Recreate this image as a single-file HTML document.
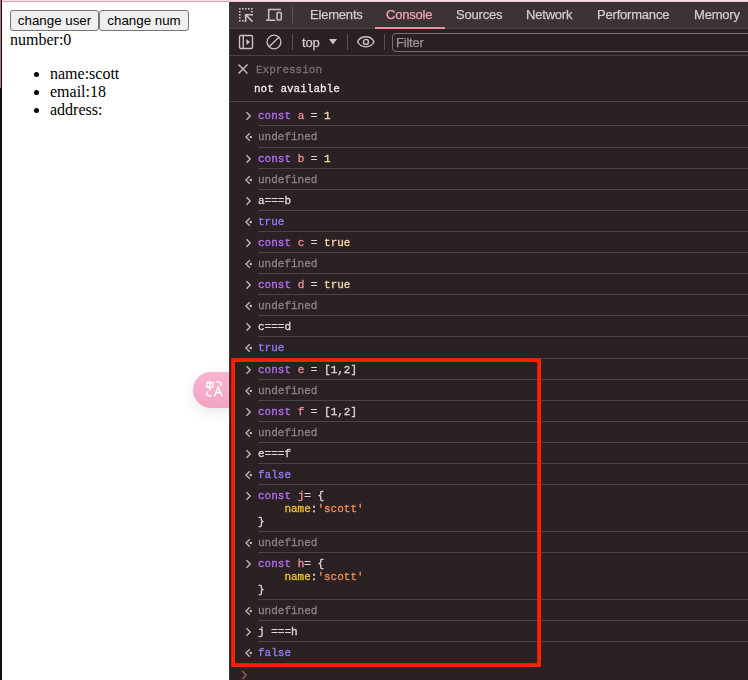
<!DOCTYPE html>
<html><head><meta charset="utf-8">
<style>
*{box-sizing:border-box}
html,body{margin:0;padding:0;width:748px;height:680px;overflow:hidden;background:#fff;position:relative}
.a{position:absolute}
#page{position:absolute;left:0;top:0;width:229px;height:680px;background:#fff;font-family:"Liberation Serif",serif;font-size:16px;color:#000}
.btn{position:absolute;top:10px;height:21px;background:#efefef;border:1px solid #767676;border-radius:3px;font-family:"Liberation Sans",sans-serif;font-size:13.33px;color:#000;line-height:20px;text-align:center;padding:0}
#dt{position:absolute;left:229px;top:0;width:519px;height:680px;background:#292122;overflow:hidden}
.tabbar{position:absolute;left:0;top:2px;width:519px;height:26px;background:#3c3335}
.tb1{position:absolute;left:0;top:28px;width:519px;height:1px;background:#4b4244}
.tab{position:absolute;will-change:transform;-webkit-text-stroke:0.25px currentColor;top:8px;font-family:"Liberation Sans",sans-serif;font-size:13px;letter-spacing:-0.2px;color:#d9c9cb;line-height:14px;white-space:nowrap}
.mono{font-family:"Liberation Mono",monospace}
.ln{position:absolute;will-change:transform;-webkit-text-stroke:0.3px currentColor;left:258px;font-family:"Liberation Mono",monospace;font-size:11px;line-height:13px;color:#e2d5d6;white-space:pre}
.sep{position:absolute;left:258px;width:490px;height:1px;background:#4a4244}
.ic{position:absolute}
.k{color:#b56ef3}
.v{color:#f08e9e}
.n{color:#fadbb0}
.k2{color:#fadbb0}
.u{color:#8c8384}
.b{color:#907ff7}
.p{color:#f0c428}
.s{color:#f28a52}
</style></head><body>
<div id="page">
  <div class="btn" style="left:10px;width:89px">change user</div>
  <div class="btn" style="left:99px;width:90px">change num</div>
  <div class="a" style="left:10px;top:31px;line-height:18px">number:0</div>
  <ul class="a" style="left:10px;top:65px;margin:0;padding:0 0 0 40px;line-height:18px;list-style:disc">
    <li style="margin-left:0">name:scott</li>
    <li>email:18</li>
    <li>address:</li>
  </ul>
  <div class="a" style="left:0;top:0;width:1px;height:88px;background:#b87684"></div>
  <div class="a" style="left:0;top:88px;width:1px;height:592px;background:#111"></div>
  <div class="a" style="left:1px;top:0;width:1px;height:680px;background:#0c0c0c"></div>
  <!-- translate pill -->
  <div class="a" style="left:193px;top:372px;width:60px;height:36px;border-radius:18px;background:linear-gradient(#f9b5d0,#f1a4c3);box-shadow:0 4px 14px rgba(0,0,0,0.09)"></div>
  <svg class="a" style="left:202px;top:376px" width="24" height="24" viewBox="0 0 24 24" fill="none" stroke="#fff" stroke-width="1.45">
    <rect x="4.7" y="6.7" width="6.2" height="4.4"/>
    <path d="M7.8 4.8 V14.5"/>
    <path d="M14 5.8 H17 Q18.9 5.8 18.9 7.7 V9.9"/>
    <path d="M5 15.4 V17.4 Q5 19.8 7.4 19.8 H9.7"/>
    <path d="M12.3 20.5 L16.2 11.4 L20.2 20.5 M13.7 16.7 H18.7"/>
  </svg>
</div>
<div id="dt"></div>
<div class="a" style="left:229px;top:29px;width:1px;height:651px;background:#403638"></div>
<!-- devtools, page coords -->
<div class="a" style="left:229px;top:2px;width:519px;height:26px;background:#3c3335"></div>
<div class="a" style="left:229px;top:28px;width:519px;height:1px;background:#4b4244"></div>
<div class="a" style="left:229px;top:55px;width:519px;height:1px;background:#4b4244"></div>
<div class="a" style="left:229px;top:101px;width:519px;height:1px;background:#4b4244"></div>
<div class="a" style="left:2px;top:0;width:746px;height:1px;background:#fcdce3"></div>
<div class="a" style="left:2px;top:1px;width:227px;height:1px;background:#cba9b1"></div><div class="a" style="left:229px;top:1px;width:519px;height:1px;background:#e8c6cd"></div>

<!-- tab bar -->
<svg class="a" style="left:237px;top:7px" width="18" height="17" viewBox="0 0 18 17">
  <g fill="#cfc0c2">
    <rect x="2" y="1" width="1.6" height="1.6"/><rect x="5" y="1" width="1.6" height="1.6"/><rect x="8" y="1" width="1.6" height="1.6"/><rect x="11" y="1" width="1.6" height="1.6"/><rect x="14" y="1" width="1.6" height="1.6"/>
    <rect x="2" y="4" width="1.6" height="1.6"/><rect x="14" y="4" width="1.6" height="1.6"/>
    <rect x="2" y="7" width="1.6" height="1.6"/><rect x="2" y="10" width="1.6" height="1.6"/><rect x="2" y="13" width="1.6" height="1.6"/><rect x="5" y="13" width="1.6" height="1.6"/>
  </g>
  <path d="M8.6 15 V7.7 H16 M9 8.1 L15.6 14.7" fill="none" stroke="#cfc0c2" stroke-width="1.6"/>
</svg>
<svg class="a" style="left:265px;top:8px" width="18" height="14" viewBox="0 0 18 14">
  <path d="M3.7 12 V1.5 H16 M1 12.2 H10.3" fill="none" stroke="#cfc0c2" stroke-width="1.5"/>
  <rect x="12" y="4.6" width="4.3" height="7.5" rx="1" fill="none" stroke="#cfc0c2" stroke-width="1.5"/>
</svg>
<div class="a" style="left:292px;top:7px;width:1px;height:16px;background:#5c5254"></div>
<div class="tab" style="left:310px">Elements</div>
<div class="tab" style="left:386px;color:#f4a2b2">Console</div>
<div class="a" style="left:375px;top:27px;width:70px;height:2px;background:#f28ca2"></div>
<div class="tab" style="left:456px">Sources</div>
<div class="tab" style="left:526px">Network</div>
<div class="tab" style="left:597px">Performance</div>
<div class="tab" style="left:694px">Memory</div>

<!-- toolbar -->
<svg class="a" style="left:238px;top:34px" width="16" height="16" viewBox="0 0 16 16">
  <rect x="1.5" y="1.5" width="13" height="13" rx="1.5" fill="none" stroke="#cfc0c2" stroke-width="1.4"/>
  <path d="M5.3 1.5 V14.5" stroke="#cfc0c2" stroke-width="1.4"/>
  <path d="M8.4 4.9 L12 8 L8.4 11.1 Z" fill="#cfc0c2"/>
</svg>
<svg class="a" style="left:265px;top:33px" width="18" height="18" viewBox="0 0 18 18">
  <circle cx="9" cy="9" r="6.9" fill="none" stroke="#cfc0c2" stroke-width="1.35"/>
  <path d="M4.2 13.8 L13.8 4.2" stroke="#cfc0c2" stroke-width="1.35"/>
</svg>
<div class="a" style="left:292px;top:34px;width:1px;height:16px;background:#5c5254"></div>
<div class="tab" style="left:302px;top:36px">top</div>
<svg class="a" style="left:328px;top:38px" width="10" height="8" viewBox="0 0 10 8"><path d="M1 1 H9 L5 6.5 Z" fill="#cfc0c2"/></svg>
<div class="a" style="left:347px;top:34px;width:1px;height:16px;background:#5c5254"></div>
<svg class="a" style="left:356px;top:35px" width="20" height="14" viewBox="0 0 20 14">
  <path d="M1.6 6.8 C4.8 0.1 14.8 0.1 18 6.8 C14.8 13.5 4.8 13.5 1.6 6.8 Z" fill="none" stroke="#cfc0c2" stroke-width="1.4"/>
  <circle cx="9.9" cy="6.9" r="2.5" fill="none" stroke="#cfc0c2" stroke-width="1.4"/>
</svg>
<div class="a" style="left:384px;top:34px;width:1px;height:16px;background:#5c5254"></div>
<div class="a" style="left:392px;top:33px;width:400px;height:19px;border:1px solid #7a6e71;border-radius:4px"></div>
<div class="tab" style="left:396px;top:36px;color:#9d9294">Filter</div>

<!-- expression -->
<svg class="a" style="left:237px;top:63px" width="12" height="12" viewBox="0 0 12 12"><path d="M1.5 1.5 L10.5 10.5 M10.5 1.5 L1.5 10.5" stroke="#cfc0c2" stroke-width="1.4"/></svg>
<div class="ln" style="left:256px;top:64px;color:#7a7072">Expression</div>
<div class="ln" style="left:254px;top:83px;color:#f2e8e9">not available</div>

<svg class="ic" style="left:245px;top:111px" width="8" height="10" viewBox="0 0 8 10"><path d="M1.5 1.2 L5.2 5 L1.5 8.8" fill="none" stroke="#c4b5b7" stroke-width="1.4"/></svg>
<div class="ln" style="top:110px"><span class="k">const</span> <span class="v">a</span> = <span class="n">1</span></div>
<div class="sep" style="top:125px"></div>
<svg class="ic" style="left:245px;top:132px" width="10" height="10" viewBox="0 0 10 10"><path d="M4.8 1.3 L0.9 5 L4.8 8.7" fill="none" stroke="#c4b5b7" stroke-width="1.4"/><rect x="4.7" y="3.9" width="2.2" height="2.2" fill="#c4b5b7"/></svg>
<div class="ln" style="top:131px"><span class="u">undefined</span></div>
<div class="sep" style="top:147px"></div>
<svg class="ic" style="left:245px;top:154px" width="8" height="10" viewBox="0 0 8 10"><path d="M1.5 1.2 L5.2 5 L1.5 8.8" fill="none" stroke="#c4b5b7" stroke-width="1.4"/></svg>
<div class="ln" style="top:153px"><span class="k">const</span> <span class="v">b</span> = <span class="n">1</span></div>
<div class="sep" style="top:168px"></div>
<svg class="ic" style="left:245px;top:175px" width="10" height="10" viewBox="0 0 10 10"><path d="M4.8 1.3 L0.9 5 L4.8 8.7" fill="none" stroke="#c4b5b7" stroke-width="1.4"/><rect x="4.7" y="3.9" width="2.2" height="2.2" fill="#c4b5b7"/></svg>
<div class="ln" style="top:174px"><span class="u">undefined</span></div>
<div class="sep" style="top:189px"></div>
<svg class="ic" style="left:245px;top:196px" width="8" height="10" viewBox="0 0 8 10"><path d="M1.5 1.2 L5.2 5 L1.5 8.8" fill="none" stroke="#c4b5b7" stroke-width="1.4"/></svg>
<div class="ln" style="top:195px">a===b</div>
<div class="sep" style="top:210px"></div>
<svg class="ic" style="left:245px;top:217px" width="10" height="10" viewBox="0 0 10 10"><path d="M4.8 1.3 L0.9 5 L4.8 8.7" fill="none" stroke="#c4b5b7" stroke-width="1.4"/><rect x="4.7" y="3.9" width="2.2" height="2.2" fill="#c4b5b7"/></svg>
<div class="ln" style="top:216px"><span class="b">true</span></div>
<div class="sep" style="top:231px"></div>
<svg class="ic" style="left:245px;top:238px" width="8" height="10" viewBox="0 0 8 10"><path d="M1.5 1.2 L5.2 5 L1.5 8.8" fill="none" stroke="#c4b5b7" stroke-width="1.4"/></svg>
<div class="ln" style="top:237px"><span class="k">const</span> <span class="v">c</span> = <span class="k2">true</span></div>
<div class="sep" style="top:252px"></div>
<svg class="ic" style="left:245px;top:259px" width="10" height="10" viewBox="0 0 10 10"><path d="M4.8 1.3 L0.9 5 L4.8 8.7" fill="none" stroke="#c4b5b7" stroke-width="1.4"/><rect x="4.7" y="3.9" width="2.2" height="2.2" fill="#c4b5b7"/></svg>
<div class="ln" style="top:258px"><span class="u">undefined</span></div>
<div class="sep" style="top:273px"></div>
<svg class="ic" style="left:245px;top:280px" width="8" height="10" viewBox="0 0 8 10"><path d="M1.5 1.2 L5.2 5 L1.5 8.8" fill="none" stroke="#c4b5b7" stroke-width="1.4"/></svg>
<div class="ln" style="top:279px"><span class="k">const</span> <span class="v">d</span> = <span class="k2">true</span></div>
<div class="sep" style="top:294px"></div>
<svg class="ic" style="left:245px;top:301px" width="10" height="10" viewBox="0 0 10 10"><path d="M4.8 1.3 L0.9 5 L4.8 8.7" fill="none" stroke="#c4b5b7" stroke-width="1.4"/><rect x="4.7" y="3.9" width="2.2" height="2.2" fill="#c4b5b7"/></svg>
<div class="ln" style="top:300px"><span class="u">undefined</span></div>
<div class="sep" style="top:315px"></div>
<svg class="ic" style="left:245px;top:322px" width="8" height="10" viewBox="0 0 8 10"><path d="M1.5 1.2 L5.2 5 L1.5 8.8" fill="none" stroke="#c4b5b7" stroke-width="1.4"/></svg>
<div class="ln" style="top:321px">c===d</div>
<div class="sep" style="top:336px"></div>
<svg class="ic" style="left:245px;top:343px" width="10" height="10" viewBox="0 0 10 10"><path d="M4.8 1.3 L0.9 5 L4.8 8.7" fill="none" stroke="#c4b5b7" stroke-width="1.4"/><rect x="4.7" y="3.9" width="2.2" height="2.2" fill="#c4b5b7"/></svg>
<div class="ln" style="top:342px"><span class="b">true</span></div>
<div class="sep" style="top:358px"></div>
<svg class="ic" style="left:245px;top:365px" width="8" height="10" viewBox="0 0 8 10"><path d="M1.5 1.2 L5.2 5 L1.5 8.8" fill="none" stroke="#c4b5b7" stroke-width="1.4"/></svg>
<div class="ln" style="top:364px"><span class="k">const</span> <span class="v">e</span> = [1,2]</div>
<div class="sep" style="top:379px"></div>
<svg class="ic" style="left:245px;top:386px" width="10" height="10" viewBox="0 0 10 10"><path d="M4.8 1.3 L0.9 5 L4.8 8.7" fill="none" stroke="#c4b5b7" stroke-width="1.4"/><rect x="4.7" y="3.9" width="2.2" height="2.2" fill="#c4b5b7"/></svg>
<div class="ln" style="top:385px"><span class="u">undefined</span></div>
<div class="sep" style="top:400px"></div>
<svg class="ic" style="left:245px;top:407px" width="8" height="10" viewBox="0 0 8 10"><path d="M1.5 1.2 L5.2 5 L1.5 8.8" fill="none" stroke="#c4b5b7" stroke-width="1.4"/></svg>
<div class="ln" style="top:406px"><span class="k">const</span> <span class="v">f</span> = [1,2]</div>
<div class="sep" style="top:421px"></div>
<svg class="ic" style="left:245px;top:428px" width="10" height="10" viewBox="0 0 10 10"><path d="M4.8 1.3 L0.9 5 L4.8 8.7" fill="none" stroke="#c4b5b7" stroke-width="1.4"/><rect x="4.7" y="3.9" width="2.2" height="2.2" fill="#c4b5b7"/></svg>
<div class="ln" style="top:427px"><span class="u">undefined</span></div>
<div class="sep" style="top:442px"></div>
<svg class="ic" style="left:245px;top:449px" width="8" height="10" viewBox="0 0 8 10"><path d="M1.5 1.2 L5.2 5 L1.5 8.8" fill="none" stroke="#c4b5b7" stroke-width="1.4"/></svg>
<div class="ln" style="top:448px">e===f</div>
<div class="sep" style="top:463px"></div>
<svg class="ic" style="left:245px;top:470px" width="10" height="10" viewBox="0 0 10 10"><path d="M4.8 1.3 L0.9 5 L4.8 8.7" fill="none" stroke="#c4b5b7" stroke-width="1.4"/><rect x="4.7" y="3.9" width="2.2" height="2.2" fill="#c4b5b7"/></svg>
<div class="ln" style="top:469px"><span class="b">false</span></div>
<div class="sep" style="top:484px"></div>
<svg class="ic" style="left:245px;top:491px" width="8" height="10" viewBox="0 0 8 10"><path d="M1.5 1.2 L5.2 5 L1.5 8.8" fill="none" stroke="#c4b5b7" stroke-width="1.4"/></svg>
<div class="ln" style="top:490px"><span class="k">const</span> <span class="v">j</span>= {</div>
<div class="ln" style="top:503px">    <span class="p">name</span>:<span class="s">'scott'</span></div>
<div class="ln" style="top:516px">}</div>
<div class="sep" style="top:531px"></div>
<svg class="ic" style="left:245px;top:538px" width="10" height="10" viewBox="0 0 10 10"><path d="M4.8 1.3 L0.9 5 L4.8 8.7" fill="none" stroke="#c4b5b7" stroke-width="1.4"/><rect x="4.7" y="3.9" width="2.2" height="2.2" fill="#c4b5b7"/></svg>
<div class="ln" style="top:537px"><span class="u">undefined</span></div>
<div class="sep" style="top:552px"></div>
<svg class="ic" style="left:245px;top:559px" width="8" height="10" viewBox="0 0 8 10"><path d="M1.5 1.2 L5.2 5 L1.5 8.8" fill="none" stroke="#c4b5b7" stroke-width="1.4"/></svg>
<div class="ln" style="top:558px"><span class="k">const</span> <span class="v">h</span>= {</div>
<div class="ln" style="top:571px">    <span class="p">name</span>:<span class="s">'scott'</span></div>
<div class="ln" style="top:584px">}</div>
<div class="sep" style="top:599px"></div>
<svg class="ic" style="left:245px;top:606px" width="10" height="10" viewBox="0 0 10 10"><path d="M4.8 1.3 L0.9 5 L4.8 8.7" fill="none" stroke="#c4b5b7" stroke-width="1.4"/><rect x="4.7" y="3.9" width="2.2" height="2.2" fill="#c4b5b7"/></svg>
<div class="ln" style="top:605px"><span class="u">undefined</span></div>
<div class="sep" style="top:620px"></div>
<svg class="ic" style="left:245px;top:627px" width="8" height="10" viewBox="0 0 8 10"><path d="M1.5 1.2 L5.2 5 L1.5 8.8" fill="none" stroke="#c4b5b7" stroke-width="1.4"/></svg>
<div class="ln" style="top:626px">j ===h</div>
<div class="sep" style="top:641px"></div>
<svg class="ic" style="left:245px;top:648px" width="10" height="10" viewBox="0 0 10 10"><path d="M4.8 1.3 L0.9 5 L4.8 8.7" fill="none" stroke="#c4b5b7" stroke-width="1.4"/><rect x="4.7" y="3.9" width="2.2" height="2.2" fill="#c4b5b7"/></svg>
<div class="ln" style="top:647px"><span class="b">false</span></div>

<!-- red box -->
<svg class="a" style="left:0;top:0" width="748" height="680"><rect x="233.1" y="360.1" width="306" height="305" fill="none" stroke="#ff2000" stroke-width="3.8"/></svg>
<!-- prompt -->
<svg class="a" style="left:241px;top:670px" width="8" height="10" viewBox="0 0 8 10"><path d="M1.3 0.9 L5 5 L1.3 9.1" fill="none" stroke="#a0606a" stroke-width="1.3"/></svg>
</body></html>
